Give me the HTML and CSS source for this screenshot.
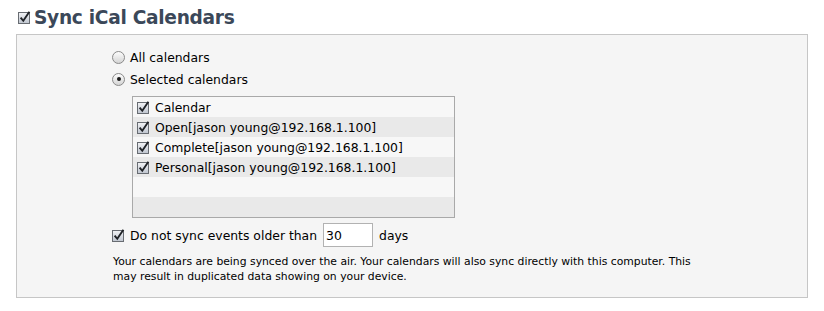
FILE: index.html
```html
<!DOCTYPE html>
<html lang="en">
<head>
  <meta charset="UTF-8">
  <title>Sync iCal Calendars</title>
  <link rel="stylesheet" href="styles.css">
</head>
<body>
  <h2 class="section-title">
    <svg class="check" width="13" height="13" viewBox="0 0 13 13"><defs><linearGradient id="cb" x1="0" y1="0" x2="0" y2="1"><stop offset="0" stop-color="#f2f3f5"/><stop offset="1" stop-color="#bfc5cf"/></linearGradient></defs><rect x="0.5" y="1.5" width="11" height="11" fill="url(#cb)" stroke="#686c72"/><path d="M2.6 6.6 L5.3 9.8 L11.4 0.8" fill="none" stroke="#1f2226" stroke-width="1.9"/></svg>
    Sync iCal Calendars
  </h2>

  <div class="panel">
    <label class="option">
      <span class="radio"></span>All calendars
    </label>
    <label class="option">
      <span class="radio on"></span>Selected calendars
    </label>

    <div class="cal-list">
      <div class="row"><svg class="check" width="13" height="13" viewBox="0 0 13 13"><rect x="0.5" y="1.5" width="11" height="11" fill="url(#cb)" stroke="#686c72"/><path d="M2.6 6.6 L5.3 9.8 L11.4 0.8" fill="none" stroke="#1f2226" stroke-width="1.9"/></svg>Calendar</div>
      <div class="row"><svg class="check" width="13" height="13" viewBox="0 0 13 13"><rect x="0.5" y="1.5" width="11" height="11" fill="url(#cb)" stroke="#686c72"/><path d="M2.6 6.6 L5.3 9.8 L11.4 0.8" fill="none" stroke="#1f2226" stroke-width="1.9"/></svg>Open[jason young@192.168.1.100]</div>
      <div class="row"><svg class="check" width="13" height="13" viewBox="0 0 13 13"><rect x="0.5" y="1.5" width="11" height="11" fill="url(#cb)" stroke="#686c72"/><path d="M2.6 6.6 L5.3 9.8 L11.4 0.8" fill="none" stroke="#1f2226" stroke-width="1.9"/></svg>Complete[jason young@192.168.1.100]</div>
      <div class="row"><svg class="check" width="13" height="13" viewBox="0 0 13 13"><rect x="0.5" y="1.5" width="11" height="11" fill="url(#cb)" stroke="#686c72"/><path d="M2.6 6.6 L5.3 9.8 L11.4 0.8" fill="none" stroke="#1f2226" stroke-width="1.9"/></svg>Personal[jason young@192.168.1.100]</div>
      <div class="row"></div>
      <div class="row"></div>
    </div>

    <div class="older">
      <svg class="check" width="13" height="13" viewBox="0 0 13 13"><rect x="0.5" y="1.5" width="11" height="11" fill="url(#cb)" stroke="#686c72"/><path d="M2.6 6.6 L5.3 9.8 L11.4 0.8" fill="none" stroke="#1f2226" stroke-width="1.9"/></svg>
      <span>Do not sync events older than</span>
      <input class="days" type="text" value="30">
      <span>days</span>
    </div>

    <p class="note">Your calendars are being synced over the air. Your calendars will also sync directly with this computer. This may result in duplicated data showing on your device.</p>
  </div>
</body>
</html>
```

FILE: styles.css
```css
body {
  margin: 0;
  background: #fff;
  font-family: 'DejaVu Sans', 'Liberation Sans', sans-serif;
  color: #000;
}
.section-title {
  display: flex;
  align-items: center;
  gap: 3px;
  margin: 0;
  padding: 6px 0 0 18px;
  height: 22px;
  font-size: 18.6px;
  font-weight: bold;
  color: #3b4859;
  letter-spacing: -0.3px;
}
.check {
  flex: none;
  display: block;
}
.panel {
  margin: 6px 16px 0;
  height: 251px;
  box-sizing: content-box;
  padding: 11px 0 0 95px;
  background: #f5f5f5;
  border: 1px solid #c6c6c6;
  font-size: 12.4px;
}
.option {
  display: flex;
  align-items: center;
  gap: 5px;
  height: 22px;
}
.radio {
  width: 11px;
  height: 11px;
  border: 1px solid #8a8a8a;
  border-radius: 50%;
  background: linear-gradient(#fdfdfd, #d4d4d4);
  position: relative;
}
.radio.on::after {
  content: '';
  position: absolute;
  left: 3.5px;
  top: 3.5px;
  width: 4px;
  height: 4px;
  border-radius: 50%;
  background: #1c1c1c;
}
.cal-list {
  width: 321px;
  margin: 6px 0 0 20px;
  border: 1px solid #a9a9a9;
}
.row {
  display: flex;
  align-items: center;
  gap: 5px;
  height: 20px;
  padding-left: 4px;
  background: #f7f7f7;
}
.row:nth-child(even) {
  background: #e9e9e9;
}
.older {
  display: flex;
  align-items: center;
  gap: 5px;
  height: 24px;
  margin-top: 5px;
}
.days {
  width: 44px;
  height: 20px;
  margin: 0 1px;
  padding: 1px 2px;
  border: 1px solid #b2b2b2;
  background: #fff;
  font: 12.4px 'DejaVu Sans', sans-serif;
  box-sizing: content-box;
}
.note {
  width: 592px;
  margin: 7px 0 0 1px;
  font-size: 10.8px;
  line-height: 15px;
}
```
